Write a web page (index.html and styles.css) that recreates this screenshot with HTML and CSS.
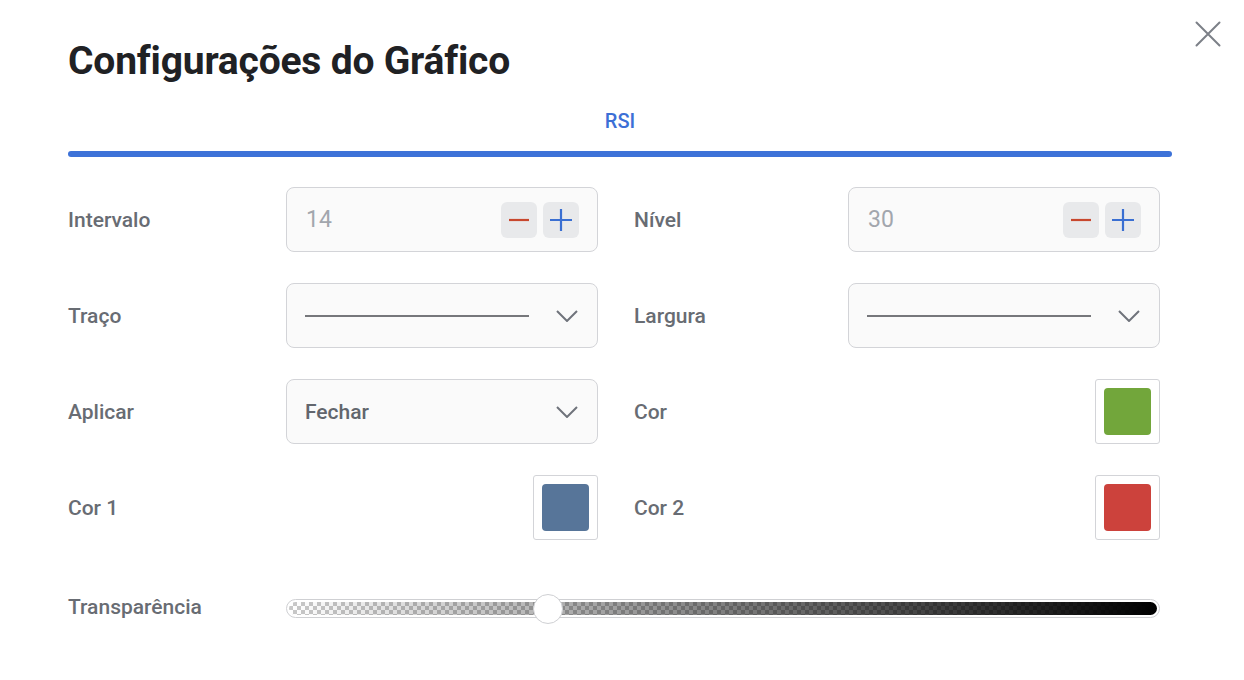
FILE: index.html
```html
<!DOCTYPE html>
<html lang="pt">
<head>
<meta charset="utf-8">
<title>Configurações do Gráfico</title>
<link rel="stylesheet" href="styles.css">
</head>
<body>
<div class="modal">
  <button class="close" aria-label="Fechar">
    <svg width="26" height="26" viewBox="0 0 26 26"><path d="M1.5 1.5 L24.5 24.5 M24.5 1.5 L1.5 24.5" stroke="#7c8088" stroke-width="2" fill="none" stroke-linecap="round"/></svg>
  </button>
  <h1 class="title">Configurações do Gráfico</h1>
  <div class="tabs">
    <div class="tab active">RSI</div>
    <div class="tab-bar"></div>
  </div>
  <div class="form">
    <div class="label">Intervalo</div>
    <div class="field stepper">
      <span class="value">14</span>
      <span class="btns">
        <span class="btn"><svg width="22" height="22" viewBox="0 0 22 22"><path d="M1 11 H21" stroke="#c8472e" stroke-width="2.2"/></svg></span>
        <span class="btn"><svg width="22" height="22" viewBox="0 0 22 22"><path d="M0 11 H22 M11 0 V22" stroke="#3a6fd2" stroke-width="2.2"/></svg></span>
      </span>
    </div>
    <div class="label right">Nível</div>
    <div class="field stepper">
      <span class="value">30</span>
      <span class="btns">
        <span class="btn"><svg width="22" height="22" viewBox="0 0 22 22"><path d="M1 11 H21" stroke="#c8472e" stroke-width="2.2"/></svg></span>
        <span class="btn"><svg width="22" height="22" viewBox="0 0 22 22"><path d="M0 11 H22 M11 0 V22" stroke="#3a6fd2" stroke-width="2.2"/></svg></span>
      </span>
    </div>

    <div class="label">Traço</div>
    <div class="field select">
      <span class="line"></span>
      <svg class="chev" width="22" height="12" viewBox="0 0 22 12"><path d="M1 1 L11 11 L21 1" stroke="#6f737b" stroke-width="2" fill="none"/></svg>
    </div>
    <div class="label right">Largura</div>
    <div class="field select">
      <span class="line"></span>
      <svg class="chev" width="22" height="12" viewBox="0 0 22 12"><path d="M1 1 L11 11 L21 1" stroke="#6f737b" stroke-width="2" fill="none"/></svg>
    </div>

    <div class="label">Aplicar</div>
    <div class="field select">
      <span class="text">Fechar</span>
      <svg class="chev" width="22" height="12" viewBox="0 0 22 12"><path d="M1 1 L11 11 L21 1" stroke="#6f737b" stroke-width="2" fill="none"/></svg>
    </div>
    <div class="label right">Cor</div>
    <div class="swatch-cell"><span class="swatch"><span class="chip green"></span></span></div>

    <div class="label">Cor 1</div>
    <div class="swatch-cell"><span class="swatch"><span class="chip blue"></span></span></div>
    <div class="label right">Cor 2</div>
    <div class="swatch-cell"><span class="swatch"><span class="chip red"></span></span></div>

    <div class="label slider-label">Transparência</div>
    <div class="slider">
      <div class="track"><div class="fill"></div></div>
      <div class="thumb" style="left: 30%"></div>
    </div>
  </div>
</div>
</body>
</html>
```

FILE: styles.css
```css
* { box-sizing: border-box; }
html, body { margin: 0; padding: 0; background: #fff; }
body {
  font-family: Roboto, "Liberation Sans", Arial, sans-serif;
  color: #202124;
}
.modal {
  position: relative;
  width: 1244px;
  height: 680px;
  padding: 38px 72px 0 68px;
}
.close {
  position: absolute;
  top: 21px;
  right: 23px;
  border: 0;
  background: none;
  padding: 0;
  width: 26px;
  height: 26px;
  cursor: pointer;
}
.close svg { display: block; }
.title {
  margin: 0;
  font-size: 39px;
  line-height: 46px;
  font-weight: 700;
  color: #202124;
  letter-spacing: -0.2px;
}
.tabs {
  margin-top: 24px;
}
.tab {
  text-align: center;
  font-size: 20px;
  line-height: 26px;
  font-weight: 500;
  color: #3c6fd6;
}
.tab-bar {
  margin-top: 17px;
  height: 6px;
  border-radius: 3px;
  background: #3d72d8;
}
.form {
  margin-top: 30px;
  display: grid;
  grid-template-columns: 218px 312px 250px 312px;
  grid-auto-rows: 65px;
  row-gap: 31px;
  align-items: center;
}
.label {
  font-size: 21px;
  font-weight: 500;
  color: #686c73;
}
.label.right { padding-left: 36px; }
.field {
  height: 65px;
  border: 1px solid #d3d4d8;
  border-radius: 8px;
  background: #fafafa;
  display: flex;
  align-items: center;
  padding: 0 18px 0 19px;
}
.value {
  flex: 1;
  font-size: 23px;
  color: #a2a6ad;
}
.btns { display: flex; gap: 6px; }
.btn {
  width: 36px;
  height: 36px;
  border-radius: 6px;
  background: #e8e9eb;
  display: flex;
  align-items: center;
  justify-content: center;
}
.btn svg { display: block; }
.select { padding: 0 19px 0 18px; }
.line {
  flex: 1;
  height: 2px;
  background: #76777b;
  margin-right: 27px;
}
.text {
  flex: 1;
  font-size: 21px;
  font-weight: 500;
  color: #62666d;
}
.chev { display: block; }
.swatch-cell {
  display: flex;
  justify-content: flex-end;
}
.swatch {
  width: 65px;
  height: 65px;
  border: 1px solid #d3d4d8;
  border-radius: 3px;
  padding: 8px;
  background: #fff;
}
.chip {
  display: block;
  width: 100%;
  height: 100%;
  border-radius: 4px;
}
.chip.green { background: #72a63b; }
.chip.blue { background: #577599; }
.chip.red { background: #cc423c; }
.slider-label { margin-top: 6px; }
.slider {
  grid-column: 2 / 5;
  margin-top: 10px;
  position: relative;
  height: 30px;
  display: flex;
  align-items: center;
}
.track {
  width: 100%;
  height: 19px;
  border: 1px solid #cfd0d3;
  border-radius: 10px;
  padding: 2px;
  background: #fff;
}
.fill {
  height: 100%;
  border-radius: 7px;
  background:
    linear-gradient(to right, rgba(0,0,0,0), #000),
    repeating-conic-gradient(#c8c8c8 0 25%, #fff 0 50%) 0 0 / 8px 8px;
}
.thumb {
  position: absolute;
  top: 0;
  width: 30px;
  height: 30px;
  margin-left: -15px;
  border-radius: 50%;
  background: #fff;
  border: 1px solid #cfd0d3;
}
```
